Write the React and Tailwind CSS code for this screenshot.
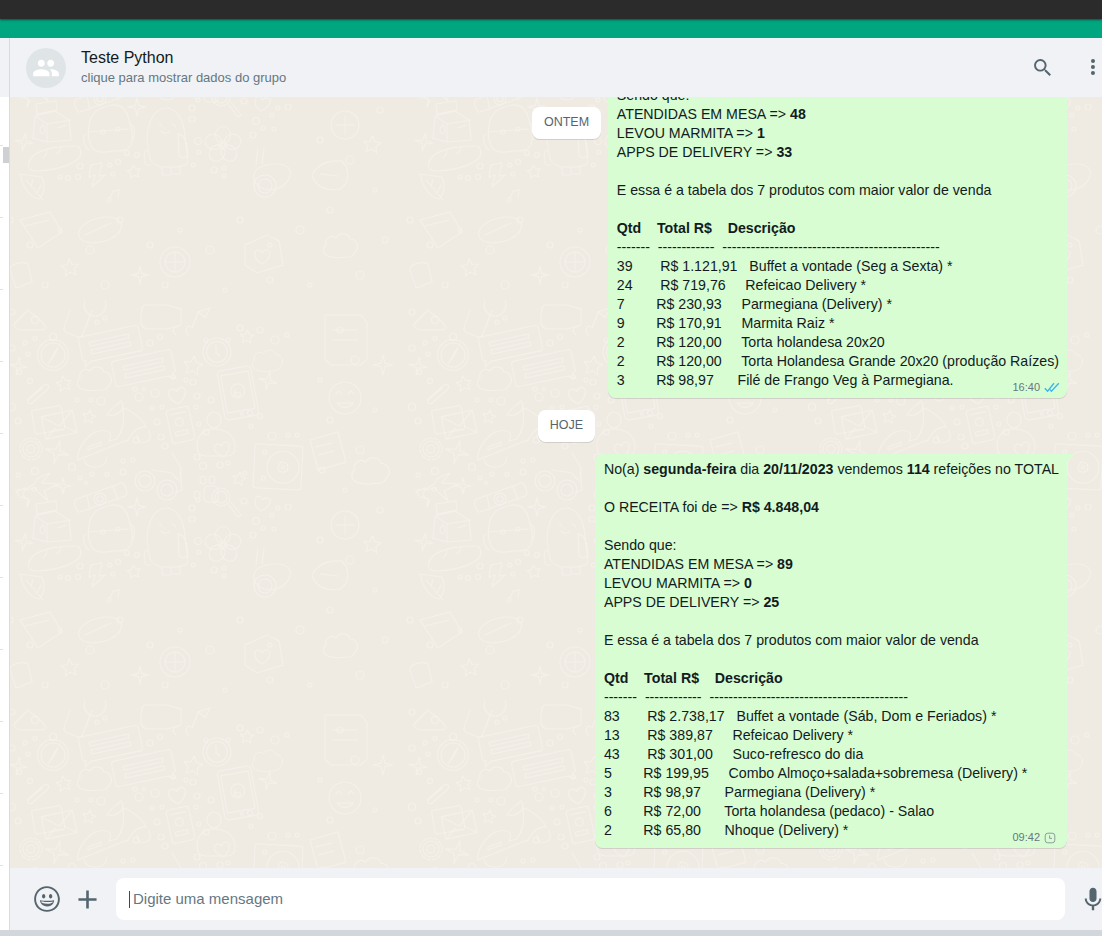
import React from "react";

const FONT = { fontFamily: '"Liberation Sans", Arial, sans-serif' };

function Star({ x, y, r = 10, rot = 0 }) {
  const pts = [];
  for (let i = 0; i < 10; i++) {
    const rr = i % 2 ? r * 0.48 : r;
    const a = (Math.PI / 5) * i - Math.PI / 2;
    pts.push(`${(rr * Math.cos(a)).toFixed(1)},${(rr * Math.sin(a)).toFixed(1)}`);
  }
  return <polygon points={pts.join(" ")} transform={`translate(${x} ${y}) rotate(${rot})`} strokeLinejoin="round" />;
}
function Spark({ x, y, r = 9, rot = 0 }) {
  const k = r * 0.18;
  return <path transform={`translate(${x} ${y}) rotate(${rot})`} d={`M0 ${-r}L${k} ${-k}L${r} 0L${k} ${k}L0 ${r}L${-k} ${k}L${-r} 0L${-k} ${-k}Z`} strokeLinejoin="round" />;
}
function Cloud({ x, y, s = 1 }) {
  return <path transform={`translate(${x} ${y}) scale(${s})`} d="M-8 12c-8 0-11-8-6-12-2-7 6-11 10-7 3-6 13-5 14 1 7 0 10 9 5 13-1 4-6 6-10 5-4 1-9 1-13 0z" />;
}
function Heart({ x, y, s = 1, rot = 0 }) {
  return <path transform={`translate(${x} ${y}) rotate(${rot}) scale(${s})`} d="M0 8C-9 3-9-6-4-6c2 0 4 2 4 3 1-2 3-3 5-3 5 0 4 9-5 14z" />;
}
function ChatBox({ x, y, rot = -12, flip = false }) {
  return (
    <g transform={`translate(${x} ${y}) rotate(${rot}) scale(${flip ? -1 : 1} 1)`}>
      <path d="M-28-13h56a3 3 0 0 1 3 3v20a3 3 0 0 1-3 3h-50l-7 4 2-6-3-1v-20a3 3 0 0 1 2-3z" />
      <path d="M-20-6h40v4h-40zM-20 2h40v4h-40z" />
    </g>
  );
}

const DOTS = [
  [12,48,3],[25,43,2],[35,38,2],[28,54,2],[19,72,2.5],[30,81,2.5],[12,107,3.5],[18,121,3],[77,100,2],[91,100,2],[101,101,4],[135,89,2],[144,89,1.5],[155,93,4],[139,97,4],[152,108,2],[162,107,2],[157,122,3],[161,137,3],[165,146,3],[186,80,2],[173,77,2],[193,82,3],[197,96,3],[211,100,3],[196,107,2],[199,124,2],[206,132,3],[197,157,3],[203,166,3.5],[220,165,3],[228,163,2],[72,167,3.5],[80,178,2],[86,183,1.5],[92,174,2],[107,174,2],[123,172,3],[123,161,2],[133,160,2],[35,171,3.5],[18,175,2],[34,189,2],[250,113,2.5],[260,116,2.5],[251,126,2],[272,136,4],[288,135,2],[297,135,2],[245,173,2],[244,201,3],[256,221,3.5],[272,215,2],[253,235,3],[263,228,2],[274,229,2],[288,207,3],[278,208,2],[198,200,2],[192,208,3],[192,219,3],[198,241,3.5],[199,252,2],[193,265,2],[214,270,3],[224,276,2],[224,268,2],[80,266,3],[110,265,2],[118,262,2.5],[127,253,2.5],[137,255,2.5],[113,274,2],[60,277,2],[68,278,2.5],[78,277,2.5],[12,12,3],[35,20,3.5],[105,18,2],[97,22,2],[160,37,2.5],[150,43,3],[260,30,3],[240,28,3],[275,40,4],[287,35,2],[340,30,3],[355,60,4],[320,80,2],[330,120,3],[375,110,2],[360,150,4],[322,170,3],[345,190,2],[380,210,3],[320,240,3],[350,260,4],[375,290,2],[330,310,3],[300,330,4],[270,345,2],[240,320,3],[210,350,4],[180,330,2],[150,345,3],[120,320,3],[90,350,4],[60,330,2],[30,345,3],[10,320,3],[385,340,3],[360,375,4],[310,385,2],[270,380,3],[225,390,2],[165,385,3],[105,385,4],[45,385,3]
];

function Tile() {
  return (
    <g fill="none" stroke="#f4f1eb" strokeWidth="1.1" strokeLinecap="round">
      {DOTS.map(([x, y, r], i) => <circle key={i} cx={x} cy={y} r={r} />)}
      <g transform="translate(53 55)"><circle r="15.5" /><circle r="12" /><circle cy="-18" r="3.5" /><path d="M5-8L-1 2-5 9 1 1z" /></g>
      <ChatBox x={110} y={44} />
      <ChatBox x={144} y={68} flip />
      <Cloud x={94} y={78} />
      <Cloud x={267} y={60} s={0.9} />
      <g transform="translate(217 52)"><circle r="14" /><circle r="10.5" /><path d="M-1-7v8l4 3" /><circle cx="-11" cy="-12" r="2" /><circle cx="11" cy="-12" r="2" /></g>
      <Star x={193} y={66} r={10} rot={8} />
      <Star x={64} y={84} r={8} rot={-10} />
      <Star x={89} y={117} r={7} rot={10} />
      <Star x={247} y={37} r={7} rot={5} />
      <Star x={239} y={179} r={7} rot={10} />
      <Star x={134} y={272} r={7} rot={-8} />
      <Spark x={18} y={66} r={9} rot={10} />
      <Spark x={57} y={152} r={12} rot={15} />
      <Spark x={63} y={186} r={8} />
      <Spark x={137} y={207} r={9} />
      <Spark x={24} y={242} r={9} rot={10} />
      <Spark x={268} y={81} r={9} rot={15} />
      <path d="M176 35c-5-4-2-10 2-8M188 35c-4-5-1-11 3-8" />
      <path d="M145 5h22l14 4v16l-14 4h-18c-7 0-9-5-8-12 0-6 1-12 4-12z" />
      <path d="M192 28l6-16 8 6M198 12l12-4-4 8" />
      <path d="M70 10l-6 18c-1 3 2 4 4 5l10 4c3 1 4-1 5-3l9-24" /><circle cx="95" cy="5" r="11" /><path d="M20 30c-6-1-7-6-4-8l12-12c3 4 12 6 18 18 0 3-20 2-26 2z" />
      <g transform="translate(238 93) rotate(-10)"><rect x="-17" y="-25" width="34" height="50" rx="4" /><rect x="-14" y="-20" width="28" height="38" /><circle r="7" cy="-2" /><path d="M-4 1c3 3 5 4 7 0l-3-2-2 1-1-2 1-2z" /><circle cy="21" r="1.5" /></g>
      <Heart x={177} y={95} s={1.1} rot={-10} />
      <Heart x={262} y={203} s={1} rot={10} />
      <path d="M27 100l17-15c4-2 6 2 3 5l-15 13c-3 2-6-1-3-4l13-11" />
      <g transform="translate(53 118) rotate(-10)"><rect x="-20" y="-11" width="30" height="24" rx="2" /></g>
      <g transform="translate(60 124) rotate(-12)"><rect x="-17" y="-11" width="32" height="23" rx="2" /><path d="M-17-11L-1 2 15-11M-17 12l12-9M15 12L4 3" /></g>
      <path d="M122 110l-5 4c-2 2-7 1-10 1 3-5 8-9 14-14l2 3zM123 108c8 2 21 12 23 19-8-1-15 6-18 13l-8 3-42 17c-2-7 5-21 17-28 5-2 11-2 14 0 2 1 2 5 0 9l8-2c5-8 8-15 6-31z" />
      <path d="M84 160c2 6 6 7 12 7 6 0 10-3 11-10M137 135c0 5 4 9 9 7 5-2 5-7 3-12" /><circle cx="136" cy="140" r="3" />
      <path d="M88 147l13-5v3l-13 5z" />
      <g transform="translate(180 125) rotate(-12)"><rect x="-11" y="-17" width="23" height="34" rx="3" /><path d="M-8-12h16" /><circle cy="-3" r="4" /><rect x="-6" y="6" width="12" height="4" /></g>
      <ellipse cx="214" cy="120" rx="7" ry="8" /><path d="M206 156c-6 0-9-3-9-10 0-11 7-17 17-17s21 5 21 18c0 6-3 9-8 9z" /><Heart x={222} y={149} s={1} rot={-15} />
      <g transform="translate(278 167) rotate(3)"><rect x="-24" y="-22" width="48" height="44" rx="3" /><circle cx="5" r="16" /><circle cx="5" r="5" /><circle cx="5" r="1.5" /><circle cx="-14" cy="-14" r="2" /><circle cx="-14" cy="12" r="2" /></g>
      <g transform="translate(31 149)"><circle r="11" strokeDasharray="4 2" /><circle r="8" /><circle r="4" /></g>
      <path d="M38 178l12-5-8 10 16 1-14 7 4 10-10-9-3-4-10 2 9-6z" />
      <path d="M16 192l9-4-2 8 7 5-3 6 1-8-8-2z" />
      <circle cx="145" cy="181" r="10" /><circle cx="145" cy="181" r="6" /><circle cx="167" cy="190" r="10" /><circle cx="167" cy="190" r="6" /><path d="M152 170l20 3 3 4 6 5v-14l-9-15M180 172l2 18-7 3" />
      <circle cx="221" cy="197" r="9" /><circle cx="221" cy="197" r="6" /><rect x="204" y="186" width="14" height="16" rx="4" /><ellipse cx="197" cy="195" rx="3" ry="4" /><ellipse cx="203" cy="180" rx="3" ry="4" /><ellipse cx="212" cy="180" rx="3" ry="4" /><path d="M228 204l10 13 3-2-10-13" />
      <path d="M35 216l20-5 14 9 2 20-24 2-14-4zM35 216l12 8v18M47 224l24-4M36 204l20-3 1 9-20 4z" /><path d="M43 224c-3 4-4 7-2 9 2 1 4 0 4-3 0-2-1-4-2-6zM58 228l8-3" />
      <path d="M90 221c2-9 10-14 22-16 10-1 15 6 17 15 3 8 4 18 2 25-3 5-8 6-17 6-8 1-14 3-21-2-5-7-6-18-3-28z" /><path d="M77 199l44-16c3-1 4 3 5 5 1 4 2 6-1 8l-45 16c-2 1-4-2-5-6-1-2-1-6 2-7zM87 196l3 14M113 186l5 14" /><circle cx="100" cy="199" r="6" /><circle cx="100" cy="199" r="3" /><path d="M85 235c-3 1-1 13 4 15M130 224c5 2 5 9 3 16M88 232l40-3" /><circle cx="103" cy="232" r="2" /><circle cx="118" cy="229" r="2" />
      <path d="M147 240c0-18 8-32 19-32s18 13 19 28c0 14 4 21 2 28-3 2-9 3-14 3h-10c-6-1-9-2-12-6-3-8-3-15-4-21z" /><path d="M148 250c-5 0-4 8-3 13 2 3 4 3 5 2M178 234c8 0 10 14 10 22-2 2-8 2-9 0zM162 268v7h9v-8M171 267v7h9v-8" /><path d="M159 224c1 0 3 1 3 3M172 224c1 0 3 0 3 3M161 231c3 3 7 3 9 0" />
      <g transform="translate(223 245)">{[0,72,144,216,288].map(a => <ellipse key={a} cy="-10" rx="7.5" ry="8.5" transform={`rotate(${a})`} />)}<circle r="4" /></g>
      <path d="M29 262c4-13 29-16 47-16 5 0 6 8 3 12-9 9-30 13-43 13-5 0-9-2-7-9zM43 258c2-2 4-5 4-7M57 254c2-2 3-4 4-6" />
      <path d="M20 274l22 3c4 8 2 17-3 22-9-1-16-12-19-25zM26 280l17 20M31 286l2-7M37 293l4-8" />
      <path d="M91 265l11-2-3 13 6-1-13 12 3-12-6 2z" /><path d="M15 190l8-1" />
      <path d="M110 298l3-7 6-1-1 8M109 298a2 2 0 1 0 .1 0" />
      <path d="M256 270c10-8 30-8 34 0 2 10-8 20-20 20-14-1-20-12-14-20z" /><circle cx="265" cy="286" r="11" /><circle cx="265" cy="286" r="7" /><path d="M256 264l2-15M262 264l2-15" />
      <path d="M325 15h36l6 8v36l-6 6h-30l-6-6z" /><path d="M332 30h25M332 40h25" />
      <circle cx="345" cy="98" r="16" /><path d="M336 94l3-3 3 3M348 94l3-3 3 3M337 103c4 6 12 6 16 0z" />
      <path d="M310 140l28-8 8 30-28 8z" /><path d="M316 147l16-4M318 155l16-4" />
      <Cloud x={370} y={170} s={1.1} />
      <circle cx="345" cy="225" r="14" /><path d="M336 225h18M345 216v18" />
      <path d="M312 275c5-10 15-15 30-14 8 8 8 22-2 28-14 3-25-3-28-14z" /><path d="M320 274l18 2" />
      <Star x={372} y={245} r={9} rot={5} />
      <Spark x={383} y={65} r={10} />
      <path d="M20 320l30-8 12 20-24 16zM25 326l24-6" /><ellipse cx="100" cy="330" rx="22" ry="12" transform="rotate(-15 100 330)" /><path d="M85 335l26-12" />
      <g transform="translate(175 362)"><circle r="15" /><circle r="10" /><path d="M-10 0h20M0-10v20" /></g>
      <path d="M245 345l22-10 12 6 4 24-26 8-12-8z" /><Heart x={262} y={356} s={1} />
      <Spark x={140} y={375} r={9} /><Star x={70} y={368} r={9} rot={-6} />
      <Cloud x={340} y={345} s={1} />
      <path d="M10 370c-2-4 10-10 18-6l4 18-16 6z" />
    </g>
  );
}

function Wallpaper() {
  return (
    <svg className="absolute inset-0 h-full w-full" aria-hidden="true">
      <defs>
        <pattern id="wa" width="400" height="400" patternUnits="userSpaceOnUse" patternTransform="translate(-10 203)">
          <Tile />
        </pattern>
      </defs>
      <rect width="100%" height="100%" fill="url(#wa)" />
    </svg>
  );
}

function Chip({ children }) {
  return (
    <div className="flex h-[32px] items-center rounded-[7.5px] bg-white px-[12px] text-[12.5px] leading-[15.5px] text-[#54656f] shadow-[0_1px_0.5px_rgba(11,20,26,0.13)]">
      {children}
    </div>
  );
}

function Ticks() {
  return (
    <svg viewBox="0 0 16 11" className="h-[11px] w-[16px] shrink-0 text-[#3fb4ec]" fill="none" stroke="currentColor" strokeWidth="1.4">
      <path d="M0.8 6.2L3.6 9.2 10 1.2M6 7.6L7.4 9.2 14.8 1.2" />
    </svg>
  );
}

function Clock() {
  return (
    <div className="flex w-[16px] shrink-0 justify-start">
      <svg viewBox="0 0 12 12" className="h-[12px] w-[12px] text-[#8c9a9b]" fill="none" stroke="currentColor" strokeWidth="1">
        <rect x="1.2" y="1.2" width="9.6" height="9.6" rx="2.6" />
        <path d="M5.6 3.4v3h2.4" />
      </svg>
    </div>
  );
}

function Bubble({ lines, time, icon, tail }) {
  return (
    <div className={`relative rounded-[7.5px] bg-[#d9fdd3] pb-[8px] pl-[9px] pr-[8px] pt-[6px] shadow-[0_1px_0.5px_rgba(11,20,26,0.13)] ${tail ? "rounded-tr-none" : ""}`}>
      {tail && (
        <svg viewBox="0 0 8 8" className="absolute left-full top-0 h-[8px] w-[8px] fill-[#d9fdd3]">
          <path d="M0 0h7.5L0 8z" />
        </svg>
      )}
      <div className="whitespace-pre text-[14.2px] leading-[19px] text-[#111b21]">
        {lines.map((l, i) => (
          <div key={i} className="h-[19px]">{l}</div>
        ))}
      </div>
      <div className="absolute bottom-[3px] right-[7px] flex items-center gap-[4px] text-[11px] leading-[15px] text-[#667781]">
        <span>{time}</span>
        {icon}
      </div>
    </div>
  );
}

const b = (t) => <b className="font-bold">{t}</b>;

const first = [
  "Sendo que:",
  <>ATENDIDAS EM MESA =&gt; {b("48")}</>,
  <>LEVOU MARMITA =&gt; {b("1")}</>,
  <>APPS DE DELIVERY =&gt; {b("33")}</>,
  " ",
  "E essa é a tabela dos 7 produtos com maior valor de venda",
  " ",
  b("Qtd    Total R$    Descrição"),
  "-------  ------------  ----------------------------------------------",
  "39       R$ 1.121,91   Buffet a vontade (Seg a Sexta) *",
  "24       R$ 719,76     Refeicao Delivery *",
  "7        R$ 230,93     Parmegiana (Delivery) *",
  "9        R$ 170,91     Marmita Raiz *",
  "2        R$ 120,00     Torta holandesa 20x20",
  "2        R$ 120,00     Torta Holandesa Grande 20x20 (produção Raízes)",
  "3        R$ 98,97      Filé de Frango Veg à Parmegiana.",
];

const second = [
  <>No(a) {b("segunda-feira")} dia {b("20/11/2023")} vendemos {b("114")} refeições no TOTAL</>,
  " ",
  <>O RECEITA foi de =&gt; {b("R$ 4.848,04")}</>,
  " ",
  "Sendo que:",
  <>ATENDIDAS EM MESA =&gt; {b("89")}</>,
  <>LEVOU MARMITA =&gt; {b("0")}</>,
  <>APPS DE DELIVERY =&gt; {b("25")}</>,
  " ",
  "E essa é a tabela dos 7 produtos com maior valor de venda",
  " ",
  b("Qtd    Total R$    Descrição"),
  "-------  ------------  ------------------------------------------",
  "83       R$ 2.738,17   Buffet a vontade (Sáb, Dom e Feriados) *",
  "13       R$ 389,87     Refeicao Delivery *",
  "43       R$ 301,00     Suco-refresco do dia",
  "5        R$ 199,95     Combo Almoço+salada+sobremesa (Delivery) *",
  "3        R$ 98,97      Parmegiana (Delivery) *",
  "6        R$ 72,00      Torta holandesa (pedaco) - Salao",
  "2        R$ 65,80      Nhoque (Delivery) *",
];

export default function App() {
  return (
    <div className="flex h-[936px] w-[1102px] flex-col overflow-hidden bg-white" style={FONT}>
      <div className="relative z-10 h-[19px] shrink-0 bg-[#2b2b2b] shadow-[0_1px_2px_rgba(0,0,0,0.5)]" />
      <div className="h-[19px] shrink-0 bg-[#00a67f]" />

      <div className="flex min-h-0 flex-1">
        <div className="relative flex w-[9px] shrink-0 flex-col">
          <div className="h-[59px] shrink-0 bg-[#f0f2f5]" />
          <div className="flex flex-col gap-[71px] pt-[48px]">
            {Array.from({ length: 11 }).map((_, i) => (
              <div key={i} className="h-px w-[3px] bg-[#dfe1e3]" />
            ))}
          </div>
          <div className="absolute left-[3px] top-[109px] h-[16px] w-[6px] bg-[#ced1d4]" />
        </div>

        <div className="flex min-w-0 flex-1 flex-col border-l border-[#d8dcdf]">
          <header className="flex h-[59px] shrink-0 items-center bg-[#f0f2f5] pl-[16px]">
            <div className="flex h-[40px] w-[40px] shrink-0 items-center justify-center rounded-full bg-[#dfe5e7]">
              <svg viewBox="0 0 24 24" className="h-[28px] w-[28px] fill-white"><path d="M16 11c1.66 0 2.99-1.34 2.99-3S17.66 5 16 5s-3 1.34-3 3 1.34 3 3 3zm-8 0c1.66 0 2.99-1.34 2.99-3S9.66 5 8 5 5 6.34 5 8s1.34 3 3 3zm0 2c-2.33 0-7 1.17-7 3.5V19h14v-2.5c0-2.33-4.67-3.5-7-3.5zm8 0c-.29 0-.62.02-.97.05 1.16.84 1.97 1.97 1.97 3.45V19h6v-2.5c0-2.33-4.67-3.5-7-3.5z" /></svg>
            </div>
            <div className="ml-[15px] flex-1">
              <div className="text-[16px] leading-[21px] text-[#111b21]">Teste Python</div>
              <div className="text-[13px] leading-[20px] text-[#667781]">clique para mostrar dados do grupo</div>
            </div>
            <svg viewBox="0 0 24 24" className="mr-[24px] h-[29px] w-[29px] shrink-0 fill-[#54656f]"><path d="M15.009 13.805h-.636l-.22-.219a5.184 5.184 0 0 0 1.256-3.386 5.207 5.207 0 1 0-5.207 5.208 5.183 5.183 0 0 0 3.385-1.255l.221.22v.635l4.004 3.999 1.194-1.195-3.997-4.007zm-4.808 0a3.605 3.605 0 1 1 0-7.21 3.605 3.605 0 0 1 0 7.21z" /></svg>
            <svg viewBox="0 0 24 24" className="mr-[-3px] h-[24px] w-[24px] shrink-0 fill-[#54656f]"><path d="M12 7a2 2 0 1 0-.001-4.001A2 2 0 0 0 12 7zm0 2a2 2 0 1 0-.001 3.999A2 2 0 0 0 12 9zm0 6a2 2 0 1 0-.001 3.999A2 2 0 0 0 12 15z" /></svg>
          </header>

          <main className="relative flex min-h-0 flex-1 flex-col justify-end overflow-hidden bg-[#efeae2] pb-[20px]">
            <Wallpaper />
            <div className="absolute left-[21px] right-0 top-[10px] z-10 flex justify-center">
              <Chip>ONTEM</Chip>
            </div>
            <div className="relative flex shrink-0 justify-end pr-[35px]">
              <Bubble lines={first} time="16:40" icon={<Ticks />} />
            </div>
            <div className="relative flex shrink-0 justify-center py-[12px] pl-[21px]">
              <Chip>HOJE</Chip>
            </div>
            <div className="relative flex shrink-0 justify-end pr-[35px]">
              <Bubble lines={second} time="09:42" icon={<Clock />} tail />
            </div>
          </main>

          <footer className="flex h-[62px] shrink-0 items-center bg-[#f0f2f5]">
            <svg viewBox="0 0 24 24" className="ml-[23px] h-[28px] w-[28px] shrink-0 fill-[#54656f]"><path d="M9.153 11.603c.795 0 1.439-.879 1.439-1.962s-.644-1.962-1.439-1.962-1.439.879-1.439 1.962.644 1.962 1.439 1.962zm-3.204 1.362c-.026-.307-.131 5.218 6.063 5.551 6.066-.25 6.066-5.551 6.066-5.551-6.078 1.416-12.129 0-12.129 0zm11.363 1.108s-.669 1.959-5.051 1.959c-3.505 0-5.388-1.164-5.607-1.959 0 0 5.912 1.055 10.658 0zM11.804 1.011C5.609 1.011.978 6.033.978 12.228s4.826 10.761 11.021 10.761S23.02 18.423 23.02 12.228c.001-6.195-5.021-11.217-11.216-11.217zM12 21.354c-5.273 0-9.381-3.886-9.381-9.159s3.942-9.548 9.215-9.548 9.548 4.275 9.548 9.548c-.001 5.272-4.109 9.159-9.382 9.159zm3.108-9.751c.795 0 1.439-.879 1.439-1.962s-.644-1.962-1.439-1.962-1.439.879-1.439 1.962.644 1.962 1.439 1.962z" /></svg>
            <svg viewBox="0 0 24 24" className="ml-[11px] h-[31px] w-[31px] shrink-0 fill-[#54656f]"><path d="M19 13h-6v6h-2v-6H5v-2h6V5h2v6h6v2z" /></svg>
            <div className="ml-[13px] flex h-[42px] w-[949px] shrink-0 items-center rounded-[8px] bg-white pl-[13px]">
              <div className="h-[17px] w-px bg-[#3b4a54]" />
              <span className="ml-[3px] text-[15px] text-[#667781]">Digite uma mensagem</span>
            </div>
            <svg viewBox="0 0 24 24" className="ml-[16px] h-[24px] w-[24px] shrink-0 fill-[#54656f]"><path d="M11.999 14.942c2.001 0 3.531-1.53 3.531-3.531V4.35c0-2.001-1.53-3.531-3.531-3.531S8.469 2.35 8.469 4.35v7.061c0 2.001 1.53 3.531 3.53 3.531zm6.238-3.53c0 3.531-2.942 6.002-6.237 6.002s-6.237-2.471-6.237-6.002H3.761c0 4.001 3.178 7.297 7.061 7.885v3.884h2.354v-3.884c3.884-.588 7.061-3.884 7.061-7.885h-2z" /></svg>
          </footer>
        </div>
      </div>

      <div className="h-[6px] shrink-0 bg-[#d1d7db]" />
    </div>
  );
}
